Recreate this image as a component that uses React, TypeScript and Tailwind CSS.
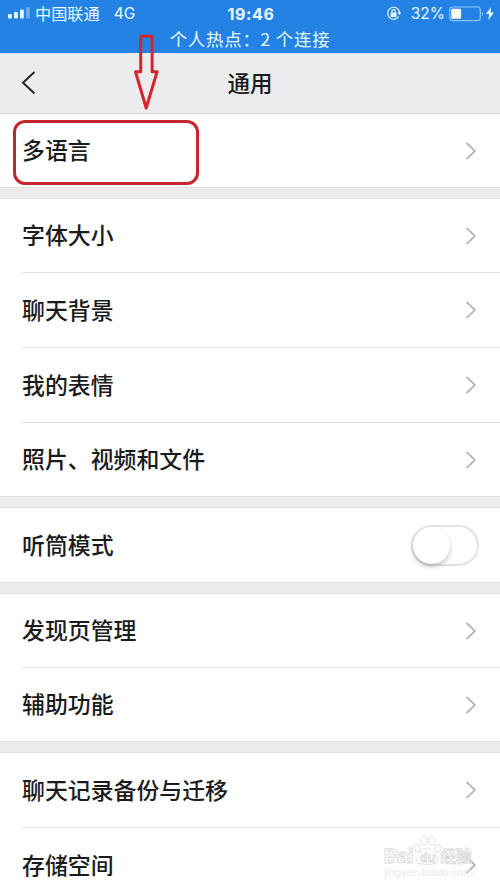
import React from "react";

type Item = { label: string; height: string; toggle?: boolean };

const groups: Item[][] = [
  [{ label: "多语言", height: "h-[73px]" }],
  [
    { label: "字体大小", height: "h-[74px]" },
    { label: "聊天背景", height: "h-[75px]" },
    { label: "我的表情", height: "h-[75px]" },
    { label: "照片、视频和文件", height: "h-[73px]" },
  ],
  [{ label: "听筒模式", height: "h-[74px]", toggle: true }],
  [
    { label: "发现页管理", height: "h-[74px]" },
    { label: "辅助功能", height: "h-[73px]" },
  ],
  [
    { label: "聊天记录备份与迁移", height: "h-[75px]" },
    { label: "存储空间", height: "h-[74px]" },
  ],
];

function StatusBar() {
  return (
    <header className="h-[53px] shrink-0 bg-[#2582e5] text-[#e9fbff]">
      <div className="flex h-[27px] items-center pl-2 pr-[6px]">
        <div className="flex flex-1 items-center">
          <svg width="22" height="12" viewBox="0 0 22 12" fill="currentColor">
            <rect x="0" y="7" width="3.8" height="4.5" rx="1" />
            <rect x="6" y="5" width="3.8" height="6.5" rx="1" />
            <rect x="12" y="2.5" width="3.8" height="9" rx="1" />
            <rect x="18" y="0" width="3.8" height="11.5" rx="1" opacity=".35" />
          </svg>
          <span className="ml-[5px] pb-px text-[16.2px] leading-none">中国联通</span>
          <span className="ml-[14px] pt-px font-['Inter'] text-[15.5px] leading-none">4G</span>
        </div>
        <span className="pt-px font-['Inter'] text-[16px] font-bold leading-none tracking-[0.6px]">19:46</span>
        <div className="flex flex-1 items-center justify-end">
          <svg width="16" height="15" viewBox="0 0 16 15" fill="none" stroke="currentColor" strokeWidth="1.2">
            <path d="M12.2 3.3A6 6 0 1 0 12.7 10.5M12.2 3.3A6 6 0 0 1 13.5 7.2" />
            <path d="M11.5 6.4h4l-2 2.6z" fill="currentColor" stroke="none" />
            <rect x="4.6" y="6.5" width="6" height="4.4" rx=".6" fill="currentColor" stroke="none" />
            <path d="M5.9 6.8V5.3a1.7 1.7 0 0 1 3.4 0v1.5" />
          </svg>
          <span className="ml-[9px] pt-px font-['Inter'] text-[15.5px] leading-none">32%</span>
          <svg className="ml-[4px]" width="36" height="16" viewBox="0 0 36 16" fill="none">
            <rect x=".7" y="1" width="30.6" height="13.6" rx="3" stroke="#8fc5f5" strokeWidth="1.2" />
            <rect x="2.3" y="2.8" width="9.8" height="10" rx="1.4" fill="white" />
            <path d="M33 5.5q2.2 2.3 0 4.6z" fill="#8fc5f5" />
          </svg>
          <svg width="8" height="13" viewBox="0 0 8 13" fill="currentColor" className="ml-px">
            <path d="M5 0 0 7h3.2L2.4 13 8 5.4H4.6z" />
          </svg>
        </div>
      </div>
      <p className="flex h-[23px] items-center justify-center whitespace-pre text-[17.4px] leading-none tracking-[0.8px]">个人热点：2 个连接</p>
    </header>
  );
}

function NavBar() {
  return (
    <nav className="relative flex h-[61px] shrink-0 items-center justify-center border-b border-[#d6d6d8] bg-[#ececee]">
      <svg className="absolute left-[21px] top-[17px]" width="16" height="26" viewBox="0 0 16 26" fill="none" stroke="#25272a" strokeWidth="2">
        <path d="M13.5 2 2 12.7l11.5 10.8" />
      </svg>
      <h1 className="pb-[2px] text-[22.5px] font-medium leading-none">通用</h1>
    </nav>
  );
}

function Chevron() {
  return (
    <svg width="12" height="20" viewBox="0 0 12 20" fill="none" stroke="#b5b5b7" strokeWidth="1.8">
      <path d="m1.5 1.8 8.4 8.2-8.4 8.2" />
    </svg>
  );
}

function Toggle() {
  return (
    <span className="flex h-[41px] w-[68px] items-center rounded-full border-2 border-[#e3e3e3] bg-white">
      <span className="h-[37px] w-[37px] rounded-full bg-white shadow-[0_3px_5px_rgba(0,0,0,0.22)]" />
    </span>
  );
}

function Row({ item, last }: { item: Item; last: boolean }) {
  return (
    <li className={`${item.height} shrink-0 pl-[22px]`}>
      <div className={`flex h-full items-center justify-between ${item.toggle ? "pr-[21px]" : "pr-[23px]"} ${last ? "" : "border-b border-[#dedede]"}`}>
        <span className="pb-[2px] text-[22.9px] font-medium leading-none">{item.label}</span>
        {item.toggle ? <Toggle /> : <Chevron />}
      </div>
    </li>
  );
}

function Pointer() {
  return (
    <>
      <svg className="absolute left-[133px] top-[34px]" width="27" height="77" viewBox="0 0 27 77" fill="none" stroke="#d4242e" strokeWidth="3">
        <path d="M7.7 2.2h11.4v35.6h5L13.2 74 2.5 37.8h5.2z" strokeLinejoin="round" />
      </svg>
      <div className="absolute left-[13px] top-[120px] h-[65px] w-[186px] rounded-[12px] border-[3px] border-[#c6252e]" />
    </>
  );
}

function Watermark() {
  return (
    <svg className="absolute left-[380px] top-[832px]" width="100" height="50" viewBox="0 0 100 50" fill="white" stroke="#d8d8d8" strokeWidth=".8">
      <text x="3.5" y="31" fontFamily="Liberation Sans, sans-serif" fontSize="21" textLength="30" fontWeight="700">Bai</text>
      <path d="M47 16c-4 0-5 4-8 6-4 4-4 9 2 10 3 .5 9 .5 12 0 6-1 6-6 2-10-3-3-4-6-8-6Z" />
      <ellipse cx="37.5" cy="16" rx="3" ry="4" transform="rotate(-15 37.5 16)" />
      <ellipse cx="44" cy="8.5" rx="3.2" ry="4.6" />
      <ellipse cx="52" cy="9" rx="3.2" ry="4.6" transform="rotate(10 52 9)" />
      <ellipse cx="58" cy="16.5" rx="3" ry="4" transform="rotate(20 58 16.5)" />
      <text x="40" y="29.5" fontFamily="Liberation Sans, sans-serif" fontSize="12.5" fontWeight="700">du</text>
      <text x="60.5" y="30" fontFamily="Noto Sans CJK SC, sans-serif" fontSize="15.5" fontWeight="700">经验</text>
      <text x="4" y="43.5" fontFamily="Liberation Sans, sans-serif" fontSize="11.5" fill="#e4e4e4" fillOpacity=".75" stroke="none" textLength="89">jingyan.baidu.com</text>
    </svg>
  );
}

export default function App() {
  return (
    <div className="relative flex h-[889px] w-[500px] flex-col overflow-hidden bg-[#ededed] font-['Noto_Sans_CJK_SC',sans-serif] text-[#1b1b1d]">
      <StatusBar />
      <NavBar />
      <main className="flex flex-col">
        {groups.map((items, index) => (
          <React.Fragment key={items[0].label}>
            {index > 0 && <div className="h-3 shrink-0 border-y border-[#dfdfdf] bg-[#ececec]" />}
            <ul className="flex flex-col bg-white">
              {items.map((item, i) => (
                <Row key={item.label} item={item} last={i === items.length - 1} />
              ))}
            </ul>
          </React.Fragment>
        ))}
      </main>
      <Pointer />
      <Watermark />
    </div>
  );
}
